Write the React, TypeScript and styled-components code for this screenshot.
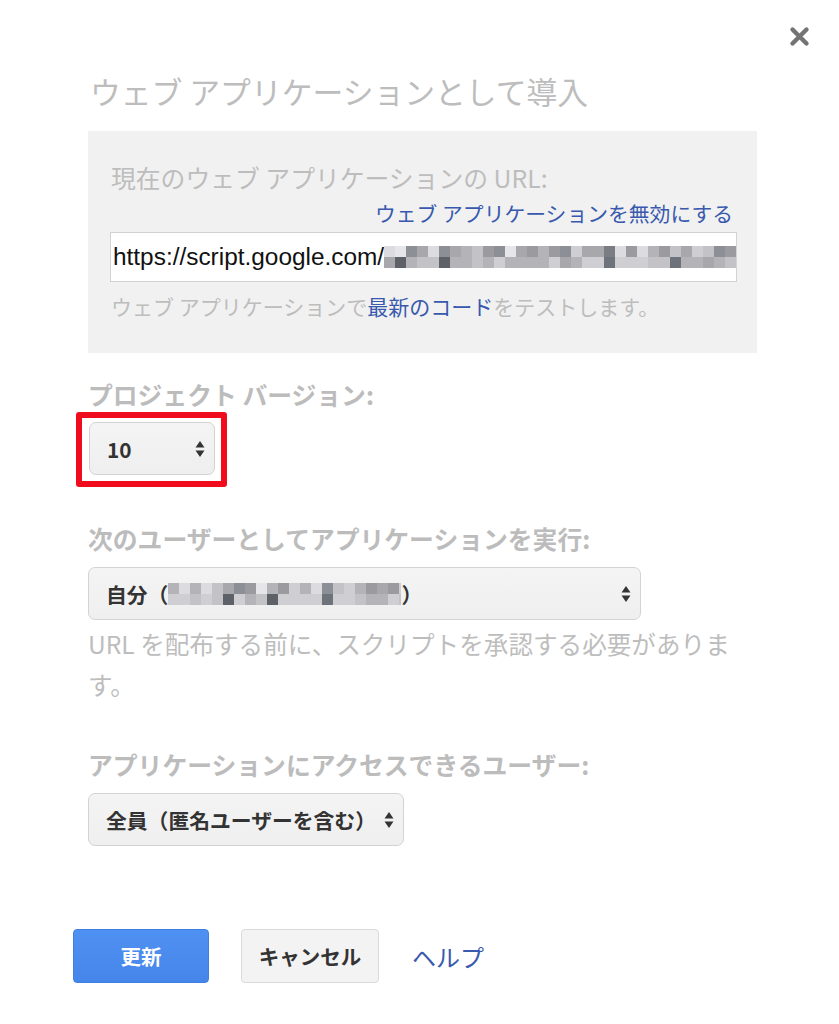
import React from 'react'
import styled, { createGlobalStyle } from 'styled-components'

const GlobalStyle = createGlobalStyle`
  html, body {
    margin: 0;
    padding: 0;
    background: #ffffff;
  }
  body {
    font-family: "Noto Sans CJK JP", "Noto Sans", sans-serif;
  }
`

const Dialog = styled.div`
  position: relative;
  width: 839px;
  height: 1024px;
  box-sizing: border-box;
  padding: 71px 82px 0 88px;
`

const CloseButton = styled.button`
  position: absolute;
  top: 26px;
  right: 29px;
  width: 21px;
  height: 21px;
  padding: 0;
  border: none;
  background: transparent;
  cursor: pointer;
`

const Title = styled.h1`
  margin: 0 0 20px 2px;
  font-size: 30.8px;
  line-height: 40px;
  font-weight: 400;
  color: #bdbdbd;
  white-space: nowrap;
`

const UrlPanel = styled.div`
  width: 669px;
  box-sizing: border-box;
  background: #f1f1f1;
  padding: 30px 20px 33px 23px;
  display: flex;
  flex-direction: column;
`

const PanelLabel = styled.div`
  font-size: 24.8px;
  line-height: 32px;
  color: #bdbdbd;
  white-space: nowrap;
`

const DisableLink = styled.a`
  align-self: flex-end;
  margin: 6px 4px 5px 0;
  font-size: 20.8px;
  line-height: 28px;
  color: #3859ad;
  text-decoration: none;
  white-space: nowrap;
`

const UrlField = styled.div`
  margin-left: -1px;
  height: 50px;
  box-sizing: border-box;
  border: 1px solid #d2d2d2;
  background: #fff;
  display: flex;
  align-items: center;
  padding-left: 2px;
  overflow: hidden;
`

const UrlText = styled.span`
  font-family: "Liberation Sans", Arial, sans-serif;
  font-size: 24.4px;
  color: #111;
  white-space: nowrap;
`

const HelpText = styled.div`
  margin-top: 10px;
  font-size: 21px;
  line-height: 28px;
  color: #bdbdbd;
  white-space: nowrap;
`

const InlineLink = styled.a`
  color: #3859ad;
  text-decoration: none;
`

const Section = styled.div<{ $top: number }>`
  margin-top: ${({ $top }) => $top}px;
  display: flex;
  flex-direction: column;
  align-items: flex-start;
`

const SectionLabel = styled.div<{ $gap: number }>`
  margin-bottom: ${({ $gap }) => $gap}px;
  font-size: 24.8px;
  line-height: 32px;
  font-weight: 700;
  color: #bcbcbc;
  white-space: nowrap;
`

const Highlight = styled.div`
  margin-left: -12px;
  border: 6px solid #f10c1d;
  border-radius: 3px;
  padding: 4px 6px 6px 7px;
`

const SelectBox = styled.div<{ $width: number }>`
  width: ${({ $width }) => $width}px;
  height: 53px;
  box-sizing: border-box;
  border: 1px solid #d3d3d3;
  border-radius: 7px;
  background: linear-gradient(#f4f4f4, #efefef);
  display: flex;
  align-items: center;
  justify-content: space-between;
  padding: 0 9px 0 17px;
  font-size: 20.8px;
  font-weight: 700;
  color: #333;
`

const SelectValue = styled.span`
  display: flex;
  align-items: center;
  white-space: nowrap;
`

const Arrows = styled.svg`
  flex: none;
`

const Note = styled.div`
  margin-top: 3px;
  width: 669px;
  font-size: 24.6px;
  line-height: 41px;
  color: #bdbdbd;
`

const ButtonRow = styled.div`
  margin: 83px 0 0 -15px;
  display: flex;
  align-items: center;
`

const Button = styled.button<{ $primary?: boolean }>`
  height: 54px;
  box-sizing: border-box;
  border-radius: 4px;
  font-family: "Noto Sans CJK JP", sans-serif;
  font-size: 20.5px;
  font-weight: 700;
  margin-right: 32px;
  padding: 0;
  cursor: pointer;
  ${({ $primary }) =>
    $primary
      ? `
    width: 136px;
    color: #fff;
    background: linear-gradient(#4f91f2, #4685ea);
    border: 1px solid #3f7fe4;
  `
      : `
    width: 138px;
    color: #333;
    background: #f3f3f3;
    border: 1px solid #dadada;
  `}
`

const HelpLink = styled.a`
  font-size: 24px;
  color: #3859ad;
  text-decoration: none;
  margin-left: 1px;
`

const shades = ['#7a7d84', '#8c8f95', '#9a9a9f', '#a8a7ab', '#b4b3b8', '#c3c2c6', '#cfcfd3', '#dcdce0', '#e6e6ea', '#6d727b', '#5f6169']

// mosaic used where the reference hides private text
const Pixelated = ({ width, rows, seed }: { width: number; rows: number[]; seed: number }) => {
  const cell = 11
  const cols = Math.ceil(width / cell)
  let s = seed
  const rand = () => {
    s = (s * 9301 + 49297) % 233280
    return s / 233280
  }
  const rects: React.ReactNode[] = []
  rows.forEach((bias, r) => {
    for (let c = 0; c < cols; c++) {
      const v = rand()
      let idx = Math.floor(v * 9 * bias + (1 - bias) * 6)
      if (r === 1 && v > 0.9) idx = 9 + (c % 2)
      idx = Math.max(0, Math.min(shades.length - 1, idx))
      rects.push(<rect key={r + '-' + c} x={c * cell} y={r * cell} width={cell} height={cell} fill={shades[idx]} />)
    }
  })
  return (
    <svg width={width} height={rows.length * cell} style={{ display: 'block', flex: 'none' }}>
      {rects}
    </svg>
  )
}

const UpDown = () => (
  <Arrows width="10" height="16" viewBox="0 0 10 16">
    <path d="M5 0 L9.5 6.5 H0.5 Z" fill="#333" />
    <path d="M5 16 L9.5 9.5 H0.5 Z" fill="#333" />
  </Arrows>
)

export default function App() {
  return (
    <>
      <GlobalStyle />
      <Dialog>
        <CloseButton aria-label="閉じる">
          <svg width="21" height="21" viewBox="0 0 21 21">
            <path d="M3.5 3.5 L17.5 17.5 M17.5 3.5 L3.5 17.5" stroke="#747474" strokeWidth="4.4" strokeLinecap="round" />
          </svg>
        </CloseButton>

        <Title>ウェブ アプリケーションとして導入</Title>

        <UrlPanel>
          <PanelLabel>現在のウェブ アプリケーションの URL:</PanelLabel>
          <DisableLink href="#">ウェブ アプリケーションを無効にする</DisableLink>
          <UrlField>
            <UrlText>https://script.google.com/</UrlText>
            <Pixelated width={360} rows={[0.9, 0.45]} seed={17} />
          </UrlField>
          <HelpText>
            ウェブ アプリケーションで<InlineLink href="#">最新のコード</InlineLink>をテストします。
          </HelpText>
        </UrlPanel>

        <Section $top={25}>
          <SectionLabel $gap={2}>プロジェクト バージョン:</SectionLabel>
          <Highlight>
            <SelectBox $width={126}>
              <SelectValue>10</SelectValue>
              <UpDown />
            </SelectBox>
          </Highlight>
        </Section>

        <Section $top={35}>
          <SectionLabel $gap={13}>次のユーザーとしてアプリケーションを実行:</SectionLabel>
          <SelectBox $width={553}>
            <SelectValue>
              自分（
              <Pixelated width={233} rows={[0.8, 0.35]} seed={5} />
              ）
            </SelectValue>
            <UpDown />
          </SelectBox>
          <Note>URL を配布する前に、スクリプトを承認する必要があります。</Note>
        </Section>

        <Section $top={43}>
          <SectionLabel $gap={13}>アプリケーションにアクセスできるユーザー:</SectionLabel>
          <SelectBox $width={316}>
            <SelectValue>全員（匿名ユーザーを含む）</SelectValue>
            <UpDown />
          </SelectBox>
        </Section>

        <ButtonRow>
          <Button $primary>更新</Button>
          <Button>キャンセル</Button>
          <HelpLink href="#">ヘルプ</HelpLink>
        </ButtonRow>
      </Dialog>
    </>
  )
}
